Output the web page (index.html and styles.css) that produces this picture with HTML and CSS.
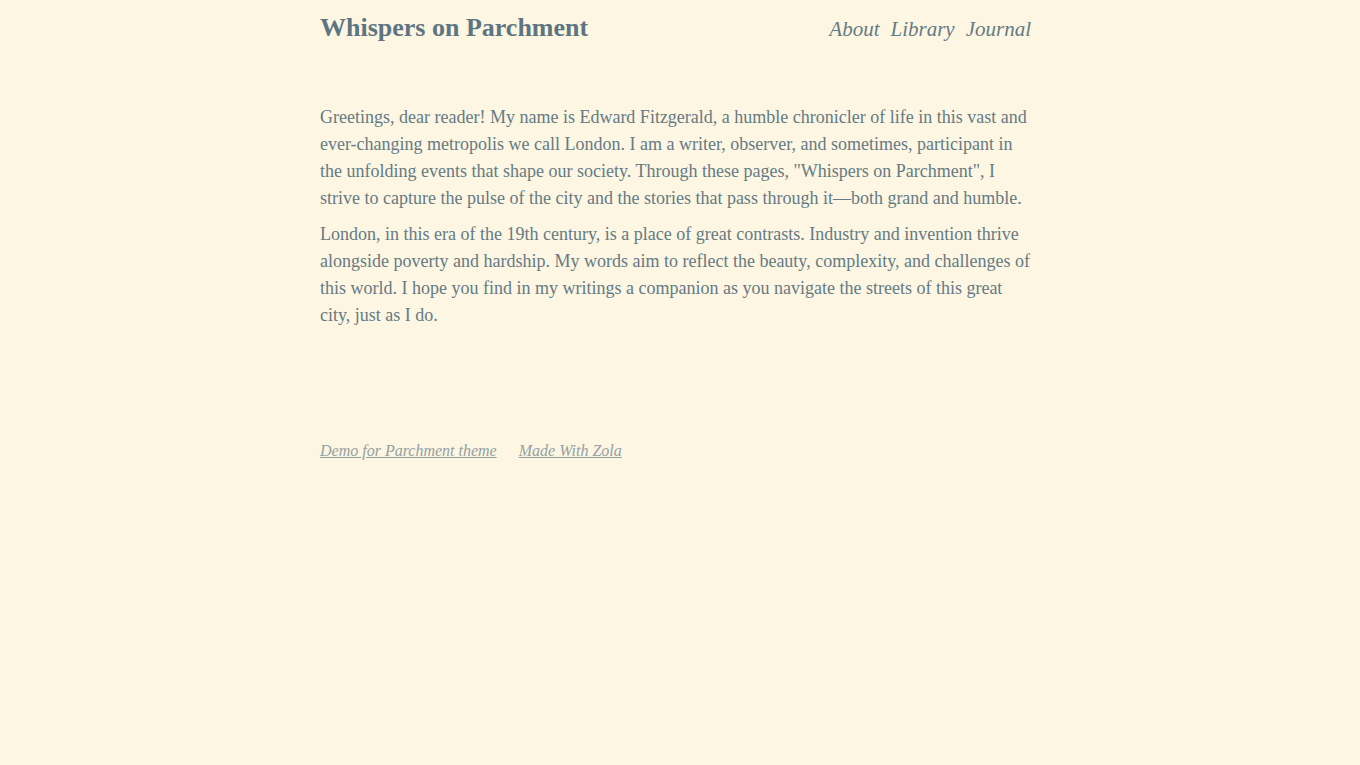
FILE: index.html
```html
<!DOCTYPE html>
<html lang="en">
  <head>
    <meta charset="UTF-8" />
    <meta name="viewport" content="width=device-width, initial-scale=1.0" />
    <title>Whispers on Parchment</title>
    <link rel="stylesheet" href="styles.css">
  </head>
  <body>
    <div class="page">
      <header class="site-header">
        <a class="site-title" href="#">Whispers on Parchment</a>
        <nav class="site-nav">
          <a href="#">About</a>
          <a href="#">Library</a>
          <a href="#">Journal</a>
        </nav>
      </header>

      <main class="intro">
        <p>Greetings, dear reader! My name is Edward Fitzgerald, a humble chronicler of life in this vast and ever-changing metropolis we call London. I am a writer, observer, and sometimes, participant in the unfolding events that shape our society. Through these pages, "Whispers on Parchment", I strive to capture the pulse of the city and the stories that pass through it&mdash;both grand and humble.</p>
        <p>London, in this era of the 19th century, is a place of great contrasts. Industry and invention thrive alongside poverty and hardship. My words aim to reflect the beauty, complexity, and challenges of this world. I hope you find in my writings a companion as you navigate the streets of this great city, just as I do.</p>
      </main>

      <footer class="site-footer">
        <a href="#">Demo for Parchment theme</a>
        <a href="#">Made With Zola</a>
      </footer>
    </div>
  </body>
</html>
```

FILE: styles.css
```css
body {
  margin: 0;
  background-color: #fdf6e3;
  color: #657b83;
  font-family: "Liberation Serif", "DejaVu Serif", serif;
}
a {
  color: inherit;
  text-decoration: none;
}
.page {
  width: 720px;
  margin: 0 auto;
}
.site-header {
  display: flex;
  justify-content: space-between;
  align-items: baseline;
  padding-top: 13px;
}
.site-title {
  font-size: 26px;
  font-weight: bold;
  color: #5d7580;
}
.site-nav {
  display: flex;
  gap: 11px;
  padding-right: 9px;
}
.site-nav a {
  font-size: 21px;
  font-style: italic;
}
.intro {
  max-width: 715px;
  margin-top: 61px;
}
.intro p {
  font-size: 18px;
  line-height: 27px;
  margin: 0 0 9px;
}
.site-footer {
  display: flex;
  gap: 22px;
  margin-top: 113px;
}
.site-footer a {
  font-size: 16px;
  font-style: italic;
  color: #93a1a1;
  text-decoration: underline;
}
```
